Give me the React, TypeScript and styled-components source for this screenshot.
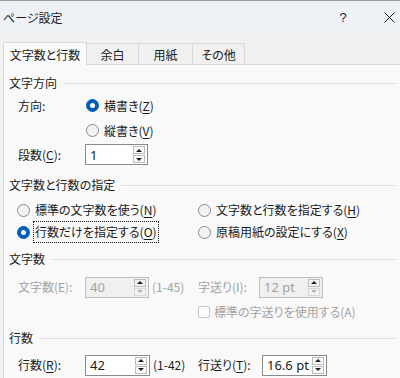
import styled, { createGlobalStyle } from "styled-components";

const GlobalStyle = createGlobalStyle`
  html, body {
    margin: 0;
    padding: 0;
    background: #f0f0f0;
  }
  body {
    font-family: "Noto Sans CJK JP", "Noto Sans", sans-serif;
    font-size: 12px;
    font-feature-settings: "palt";
    color: #1b1b1b;
  }
`;

function Spin({
  value,
  width,
  disabled,
}: {
  value: string;
  width: number;
  disabled?: boolean;
}) {
  return (
    <SpinBox $w={width} $disabled={disabled}>
      <SpinValue $disabled={disabled}>{value}</SpinValue>
      <SpinButtons>
        <SpinButton $disabled={disabled}>
          <Arrow $up />
        </SpinButton>
        <SpinButton $disabled={disabled} $dim={disabled}>
          <Arrow $dim={disabled} />
        </SpinButton>
      </SpinButtons>
    </SpinBox>
  );
}

function Radio({
  checked,
  children,
  focus,
}: {
  checked?: boolean;
  children: React.ReactNode;
  focus?: boolean;
}) {
  return (
    <RadioItem>
      <RadioDot $checked={checked} />
      <RadioLabel $focus={focus}>{children}</RadioLabel>
    </RadioItem>
  );
}

export default function App() {
  return (
    <Window>
      <GlobalStyle />
      <TitleBar>
        <Title>ページ設定</Title>
        <TitleButtons>
          <Help>?</Help>
          <Close>
            <svg width="11" height="11" viewBox="0 0 11 11">
              <path d="M0.5 0.5 L10.5 10.5 M10.5 0.5 L0.5 10.5" stroke="#1b1b1b" strokeWidth="1" />
            </svg>
          </Close>
        </TitleButtons>
      </TitleBar>
      <TabStrip>
        <Tab $w={84} $active>
          文字数と行数
        </Tab>
        <Tab $w={52}>余白</Tab>
        <Tab $w={54}>用紙</Tab>
        <Tab $w={52}>その他</Tab>
      </TabStrip>
      <Panel>
        <Header>
          <span>文字方向</span>
          <Rule />
        </Header>
        <Row $h={25}>
          <Label $w={68}>方向:</Label>
          <Radio checked>
            横書き(<u>Z</u>)
          </Radio>
        </Row>
        <Row $h={25}>
          <Label $w={68} />
          <Radio>
            縦書き(<u>V</u>)
          </Radio>
        </Row>
        <Row $h={23}>
          <Label $w={67}>
            段数(<u>C</u>):
          </Label>
          <Spin value="1" width={63} />
        </Row>

        <Header $mt={9}>
          <span>文字数と行数の指定</span>
          <Rule />
        </Header>
        <Row $h={22} $mt={4} $pl={13}>
          <Cell $w={181}>
            <Radio>
              標準の文字数を使う(<u>N</u>)
            </Radio>
          </Cell>
          <Radio>
            文字数と行数を指定する(<u>H</u>)
          </Radio>
        </Row>
        <Row $h={22} $pl={13}>
          <Cell $w={181}>
            <Radio checked focus>
              行数だけを指定する(<u>O</u>)
            </Radio>
          </Cell>
          <Radio>
            原稿用紙の設定にする(<u>X</u>)
          </Radio>
        </Row>

        <Header $mt={6}>
          <span>文字数</span>
          <Rule />
        </Header>
        <Row $h={22} $mt={7}>
          <Cell $w={180}>
            <Label $w={67} $disabled>
              文字数(E):
            </Label>
            <Spin value="40" width={64} disabled />
            <Range $disabled>(1-45)</Range>
          </Cell>
          <Label $w={61} $disabled>
            字送り(I):
          </Label>
          <Spin value="12 pt" width={64} disabled />
        </Row>
        <Row $h={22} $mt={3}>
          <Cell $w={180} />
          <CheckItem>
            <CheckBox />
            <Label $disabled>標準の字送りを使用する(A)</Label>
          </CheckItem>
        </Row>

        <Header $mt={5}>
          <span>行数</span>
          <Rule />
        </Header>
        <Row $h={22} $mt={6}>
          <Cell $w={180}>
            <Label $w={67}>
              行数(<u>R</u>):
            </Label>
            <Spin value="42" width={65} />
            <Range>(1-42)</Range>
          </Cell>
          <Label $w={64}>
            行送り(<u>T</u>):
          </Label>
          <Spin value="16.6 pt" width={65} />
        </Row>
      </Panel>
    </Window>
  );
}

const Window = styled.div`
  width: 400px;
  height: 378px;
  overflow: hidden;
  display: flex;
  flex-direction: column;
  background: #f0f0f0;
  border-top: 1px solid #9a9a9a;
  box-sizing: border-box;
`;

const TitleBar = styled.div`
  height: 31px;
  display: flex;
  align-items: center;
  justify-content: space-between;
  padding-left: 3px;
  background: #eef2f7;
`;

const Title = styled.div`
  font-size: 12px;
  line-height: 14px;
  margin-top: 2px;
`;

const TitleButtons = styled.div`
  display: flex;
  align-items: center;
  margin-top: 1px;
`;

const Help = styled.div`
  width: 46px;
  text-align: center;
  font-family: "Liberation Sans", sans-serif;
  font-size: 13px;
`;

const Close = styled.div`
  width: 46px;
  display: flex;
  justify-content: center;
  margin-right: -12px;
`;

const TabStrip = styled.div`
  display: flex;
  align-items: flex-end;
  padding: 9px 0 0 3px;
  height: 23px;
`;

const Tab = styled.div<{ $w: number; $active?: boolean }>`
  width: ${(p) => p.$w}px;
  height: ${(p) => (p.$active ? 23 : 21)}px;
  box-sizing: border-box;
  display: flex;
  align-items: center;
  justify-content: center;
  font-size: 12px;
  background: ${(p) => (p.$active ? "#f9f9f9" : "#f0f0f0")};
  border: 1px solid #d9d9d9;
  border-left: ${(p) => (p.$active ? "1px solid #d9d9d9" : "none")};
  border-bottom: none;
  position: relative;
  top: ${(p) => (p.$active ? 1 : 0)}px;
  z-index: ${(p) => (p.$active ? 1 : 0)};
`;

const Panel = styled.div`
  flex: 1;
  margin-left: 3px;
  background: #f9f9f9;
  border-top: 1px solid #d9d9d9;
  border-left: 1px solid #d9d9d9;
  padding-top: 8px;
  display: flex;
  flex-direction: column;
`;

const Header = styled.div<{ $mt?: number }>`
  height: 20px;
  margin-top: ${(p) => p.$mt ?? 0}px;
  display: flex;
  align-items: center;
  padding-left: 5px;
  gap: 6px;
  line-height: 14px;
  white-space: nowrap;
`;

const Rule = styled.div`
  flex: 1;
  height: 1px;
  background: #e0e0e0;
  margin-right: 4px;
  margin-top: 1px;
`;

const Row = styled.div<{ $h: number; $mt?: number; $pl?: number }>`
  height: ${(p) => p.$h}px;
  margin-top: ${(p) => p.$mt ?? 0}px;
  display: flex;
  align-items: center;
  padding-left: ${(p) => p.$pl ?? 14}px;
  white-space: nowrap;
`;

const Cell = styled.div<{ $w: number }>`
  width: ${(p) => p.$w}px;
  display: flex;
  align-items: center;
  flex-shrink: 0;
`;

const Label = styled.div<{ $w?: number; $disabled?: boolean }>`
  width: ${(p) => (p.$w ? `${p.$w}px` : "auto")};
  flex-shrink: 0;
  line-height: 14px;
  color: ${(p) => (p.$disabled ? "#a2a2a2" : "#1b1b1b")};
  u {
    text-underline-offset: 2px;
  }
`;

const Range = styled.div<{ $disabled?: boolean }>`
  margin-left: 3px;
  line-height: 14px;
  color: ${(p) => (p.$disabled ? "#a2a2a2" : "#1b1b1b")};
`;

const RadioItem = styled.div`
  display: flex;
  align-items: center;
  gap: 3px;
  line-height: 14px;
  u {
    text-underline-offset: 2px;
  }
`;

const RadioDot = styled.div<{ $checked?: boolean }>`
  width: 13px;
  height: 13px;
  box-sizing: border-box;
  border-radius: 50%;
  flex-shrink: 0;
  position: relative;
  background: ${(p) => (p.$checked ? "#005fb8" : "#f3f3f3")};
  border: 1px solid ${(p) => (p.$checked ? "#005fb8" : "#8a8a8a")};
  &::after {
    content: "";
    display: ${(p) => (p.$checked ? "block" : "none")};
    position: absolute;
    left: 3px;
    top: 3px;
    width: 5px;
    height: 5px;
    border-radius: 50%;
    background: #ffffff;
  }
`;

const RadioLabel = styled.div<{ $focus?: boolean }>`
  padding: 3px 1px;
  border: 1px dotted ${(p) => (p.$focus ? "#1b1b1b" : "transparent")};
`;

const CheckItem = styled.div`
  display: flex;
  align-items: center;
  gap: 4px;
`;

const CheckBox = styled.div`
  width: 12px;
  height: 12px;
  box-sizing: border-box;
  border: 1px solid #c6c6c6;
  border-radius: 2px;
  background: #fbfbfb;
`;

const SpinBox = styled.div<{ $w: number; $disabled?: boolean }>`
  width: ${(p) => p.$w}px;
  height: 21px;
  box-sizing: border-box;
  flex-shrink: 0;
  display: flex;
  align-items: center;
  justify-content: space-between;
  border: 1px solid ${(p) => (p.$disabled ? "#bdbdbd" : "#8a8a8a")};
  background: ${(p) => (p.$disabled ? "#f0f0f0" : "#ffffff")};
  padding: 0 2px 0 4px;
`;

const SpinValue = styled.div<{ $disabled?: boolean }>`
  font-family: "Noto Sans", sans-serif;
  font-size: 13px;
  line-height: 14px;
  color: ${(p) => (p.$disabled ? "#a2a2a2" : "#1b1b1b")};
`;

const SpinButtons = styled.div`
  display: flex;
  flex-direction: column;
  gap: 1px;
`;

const SpinButton = styled.div<{ $disabled?: boolean; $dim?: boolean }>`
  width: 12px;
  height: 8px;
  box-sizing: border-box;
  border: 1px solid ${(p) => (p.$dim ? "#d6d6d6" : "#bcbcbc")};
  background: ${(p) => (p.$disabled ? "#f2f2f2" : "#fafafa")};
  display: flex;
  align-items: center;
  justify-content: center;
`;

const Arrow = styled.div<{ $up?: boolean; $dim?: boolean }>`
  width: 0;
  height: 0;
  border-left: 3px solid transparent;
  border-right: 3px solid transparent;
  ${(p) =>
    p.$up
      ? `border-bottom: 3px solid ${p.$dim ? "#b0b0b0" : "#1b1b1b"};`
      : `border-top: 3px solid ${p.$dim ? "#b0b0b0" : "#1b1b1b"};`}
`;
